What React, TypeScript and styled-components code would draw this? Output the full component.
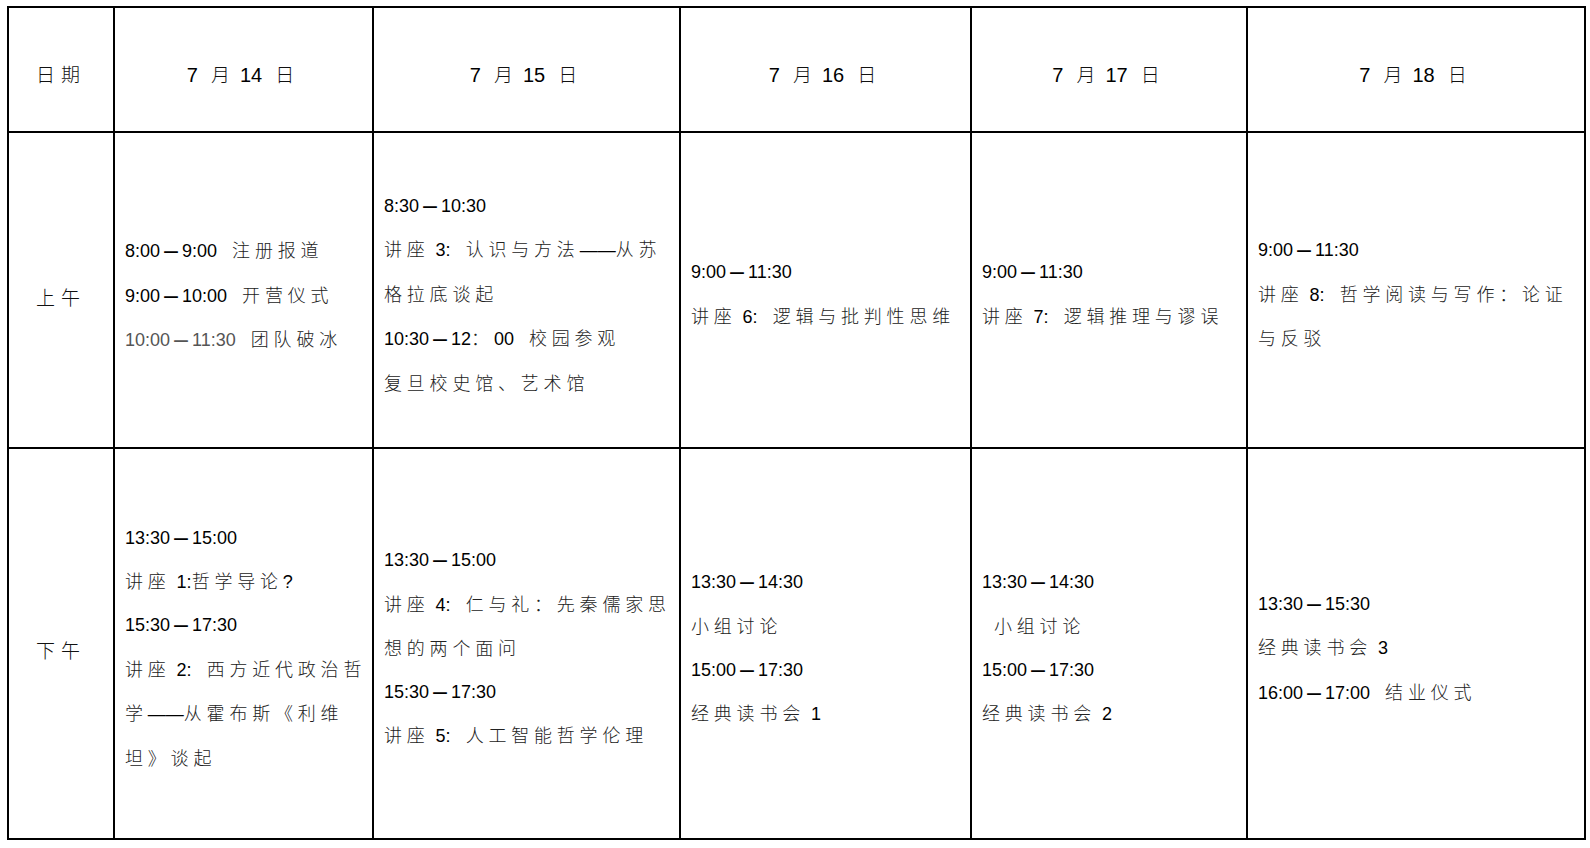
import React from "react";
import styled, { createGlobalStyle } from "styled-components";

const GlobalStyle = createGlobalStyle`
  html, body {
    margin: 0;
    padding: 0;
    background: #fff;
    overflow: hidden;
  }
  body {
    font-family: "Liberation Sans", "Noto Sans CJK SC", sans-serif;
    color: #000;
  }
`;

const Page = styled.div`
  padding: 6px 0 0 7px;
`;

// 표 전체: 6열 3행, 바깥 테두리 2px
const Table = styled.div`
  display: grid;
  grid-template-columns: 106px 259px 307px 291px 276px 338px;
  grid-template-rows: 125px 316px 391px;
  width: max-content;
  border-top: 2px solid #000;
  border-left: 2px solid #000;
  box-sizing: border-box;
`;

const Cell = styled.div<{ $center?: boolean; $label?: boolean }>`
  box-sizing: border-box;
  border-right: 2px solid #000;
  border-bottom: 2px solid #000;
  display: flex;
  flex-direction: column;
  justify-content: center;
  align-items: ${(p) => (p.$center ? "center" : "flex-start")};
  padding: ${(p) => (p.$label ? "14px" : "10px")} 6px 0
    ${(p) => (p.$center ? "6px" : "10px")};
  overflow: hidden;
`;

const Line = styled.div<{ $muted?: boolean; $big?: boolean }>`
  white-space: nowrap;
  line-height: ${(p) => (p.$big ? "28px" : "42.6px")};
  font-size: ${(p) => (p.$big ? "20px" : "18px")};
  color: ${(p) => (p.$muted ? "#555" : "#000")};
`;

const Latin = styled.span`
  font-family: "Liberation Sans", Arial, sans-serif;
  letter-spacing: 0;
`;

const Dash = styled.span`
  display: inline-block;
  font-family: "Liberation Sans", Arial, sans-serif;
  font-weight: 700;
  transform: scaleX(1.55);
  margin: 0 6px;
`;

const LongDash = styled.span`
  font-family: "Liberation Sans", Arial, sans-serif;
  letter-spacing: 0;
`;

const Gap = styled.span<{ $w: number }>`
  display: inline-block;
  width: ${(p) => p.$w}px;
`;

const Cjk = styled.span<{ $big?: boolean }>`
  font-family: "Noto Sans CJK SC", sans-serif;
  font-weight: 300;
  font-size: ${(p) => (p.$big ? "19px" : "18px")};
  letter-spacing: ${(p) => (p.$big ? "6px" : "4.8px")};
  color: ${(p) => (p.$big ? "#111" : "#222")};
`;

type LineData = string | { text: string; muted?: boolean };

const isLatin = (s: string) => /^[\x21-\x7e–]+$/.test(s);
const isCjk = (s: string) => s !== " " && !isLatin(s) && !/^—+$/.test(s);

function Text({ text, big }: { text: string; big?: boolean }) {
  const parts = text.split(/(–|—+| |[\x21-\x7e]+)/).filter((s) => s.length > 0);
  return (
    <>
      {parts.map((p, i) => {
        if (p === " ") {
          // 한자 뒤의 공백은 자간이 이미 있으므로 좁게
          const afterCjk = i > 0 && isCjk(parts[i - 1]);
          const w = big ? (afterCjk ? 4 : 13) : afterCjk ? 6 : 15;
          return <Gap key={i} $w={i === 0 ? 12 : w} />;
        }
        if (p === "–") return <Dash key={i}>{p}</Dash>;
        if (/^—+$/.test(p)) return <LongDash key={i}>{p}</LongDash>;
        if (isLatin(p)) return <Latin key={i}>{p}</Latin>;
        return (
          <Cjk key={i} $big={big}>
            {p}
          </Cjk>
        );
      })}
    </>
  );
}

const headers = ["日期", "7 月 14 日", "7 月 15 日", "7 月 16 日", "7 月 17 日", "7 月 18 日"];

const morning: LineData[][] = [
  [
    "8:00–9:00 注册报道",
    "9:00–10:00 开营仪式",
    { text: "10:00–11:30 团队破冰", muted: true },
  ],
  [
    "8:30–10:30",
    "讲座 3: 认识与方法——从苏",
    "格拉底谈起",
    "10:30–12：00 校园参观",
    "复旦校史馆、艺术馆",
  ],
  ["9:00–11:30", "讲座 6: 逻辑与批判性思维"],
  ["9:00–11:30", "讲座 7: 逻辑推理与谬误"],
  ["9:00–11:30", "讲座 8: 哲学阅读与写作：论证", "与反驳"],
];

const afternoon: LineData[][] = [
  [
    "13:30–15:00",
    "讲座 1:哲学导论?",
    "15:30–17:30",
    "讲座 2: 西方近代政治哲",
    "学——从霍布斯《利维",
    "坦》谈起",
  ],
  [
    "13:30–15:00",
    "讲座 4: 仁与礼：先秦儒家思",
    "想的两个面问",
    "15:30–17:30",
    "讲座 5: 人工智能哲学伦理",
  ],
  ["13:30–14:30", "小组讨论", "15:00–17:30", "经典读书会 1"],
  ["13:30–14:30", " 小组讨论", "15:00–17:30", "经典读书会 2"],
  ["13:30–15:30", "经典读书会 3", "16:00–17:00 结业仪式"],
];

function Row({ label, cells }: { label: string; cells: LineData[][] }) {
  return (
    <>
      <Cell $center $label>
        <Line $big>
          <Text text={label} big />
        </Line>
      </Cell>
      {cells.map((lines, ci) => (
        <Cell key={ci}>
          {lines.map((l, li) => {
            const d = typeof l === "string" ? { text: l } : l;
            return (
              <Line key={li} $muted={d.muted}>
                <Text text={d.text} />
              </Line>
            );
          })}
        </Cell>
      ))}
    </>
  );
}

export default function App() {
  return (
    <Page>
      <GlobalStyle />
      <Table>
        {headers.map((h, i) => (
          <Cell key={i} $center>
            <Line $big>
              <Text text={h} big />
            </Line>
          </Cell>
        ))}
        <Row label="上午" cells={morning} />
        <Row label="下午" cells={afternoon} />
      </Table>
    </Page>
  );
}
